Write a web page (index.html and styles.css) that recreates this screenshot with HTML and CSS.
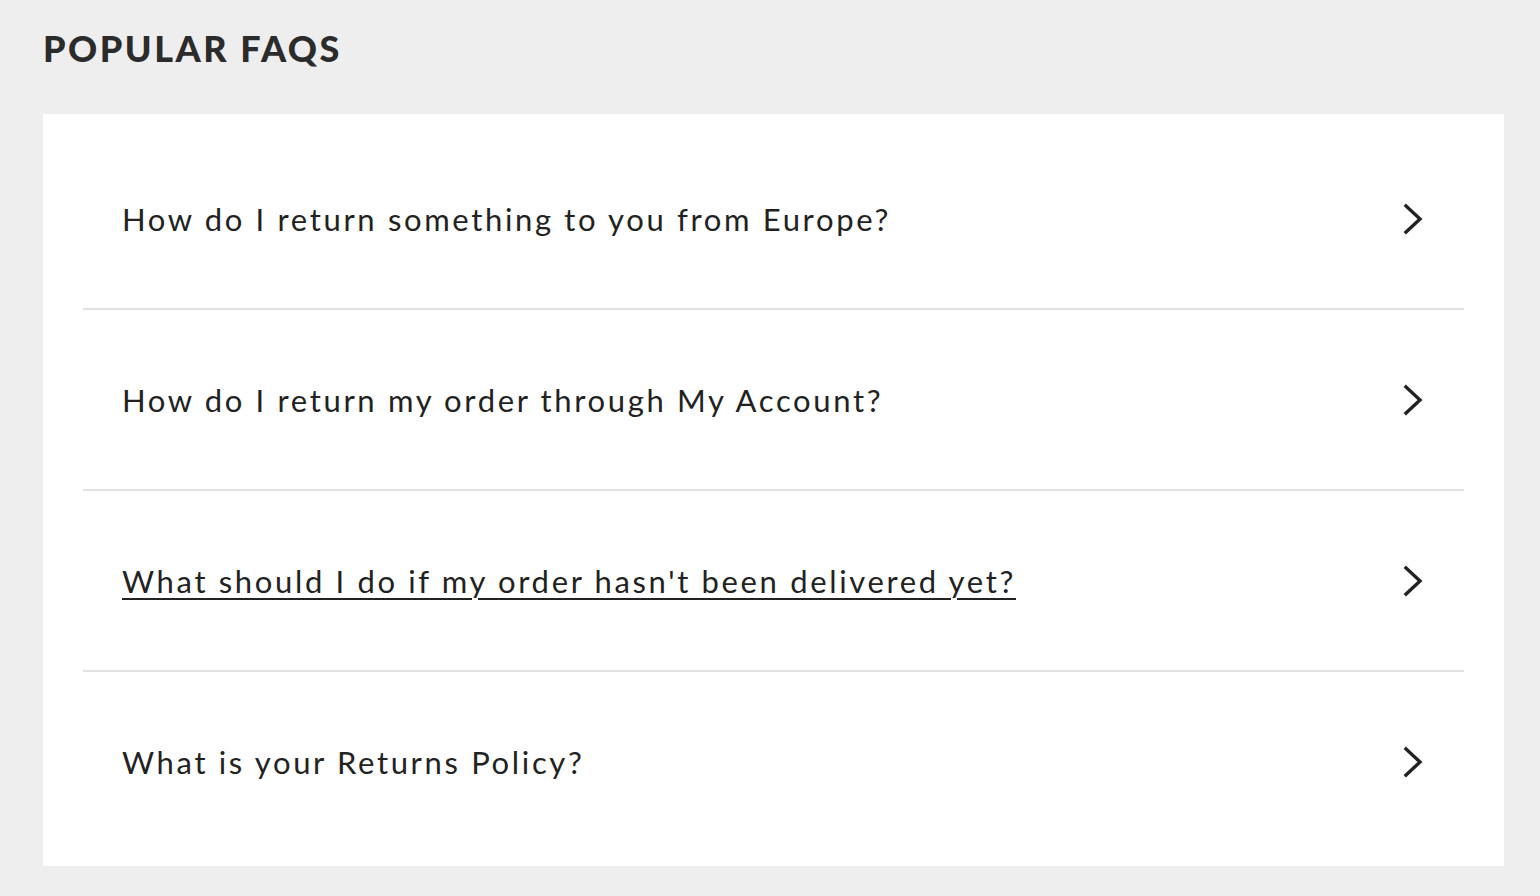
FILE: index.html
```html
<!DOCTYPE html>
<html lang="en">
<head>
<meta charset="utf-8">
<title>Popular FAQs</title>
<link rel="stylesheet" href="styles.css">
</head>
<body>
<main class="page">
  <h2 class="title">POPULAR FAQS</h2>
  <ul class="faq-card">
    <li class="faq-row"><a class="faq-link" href="#"><span class="faq-text">How do I return something to you from Europe?</span><svg class="chev" viewBox="0 0 24 32" width="24" height="32"><path d="M4 3 L18 16 L4 29" fill="none" stroke="#222" stroke-width="3.4" stroke-linecap="square"/></svg></a></li>
    <li class="faq-row"><a class="faq-link" href="#"><span class="faq-text">How do I return my order through My Account?</span><svg class="chev" viewBox="0 0 24 32" width="24" height="32"><path d="M4 3 L18 16 L4 29" fill="none" stroke="#222" stroke-width="3.4" stroke-linecap="square"/></svg></a></li>
    <li class="faq-row"><a class="faq-link" href="#"><span class="faq-text underline">What should I do if my order hasn't been delivered yet?</span><svg class="chev" viewBox="0 0 24 32" width="24" height="32"><path d="M4 3 L18 16 L4 29" fill="none" stroke="#222" stroke-width="3.4" stroke-linecap="square"/></svg></a></li>
    <li class="faq-row"><a class="faq-link" href="#"><span class="faq-text">What is your Returns Policy?</span><svg class="chev" viewBox="0 0 24 32" width="24" height="32"><path d="M4 3 L18 16 L4 29" fill="none" stroke="#222" stroke-width="3.4" stroke-linecap="square"/></svg></a></li>
  </ul>
</main>
</body>
</html>
```
FILE: styles.css
```css
html, body {
  margin: 0;
  padding: 0;
  background: #eeeeee;
}
body {
  font-family: "Lato", "Noto Sans", sans-serif;
  color: #222;
}
.page {
  padding: 26px 36px 30px 43px;
}
.title {
  margin: 0 0 44px 0;
  font-size: 36px;
  line-height: 44px;
  font-weight: 900;
  letter-spacing: 2.5px;
  color: #2b2b2b;
}
.faq-card {
  list-style: none;
  margin: 0;
  background: #fff;
  padding: 15px 40px 15px 40px;
}
.faq-row {
  border-bottom: 2px solid #e2e2e2;
}
.faq-row:last-child {
  border-bottom: none;
}
.faq-link {
  display: flex;
  align-items: center;
  justify-content: space-between;
  height: 179px;
  padding: 0 38px 0 39px;
  color: #222;
  text-decoration: none;
}
.faq-text {
  font-size: 31px;
  letter-spacing: 2.65px;
}
.faq-text.underline {
  text-decoration: underline;
  text-decoration-thickness: 2px;
  text-underline-offset: 5px;
}
.chev {
  display: block;
}
```
